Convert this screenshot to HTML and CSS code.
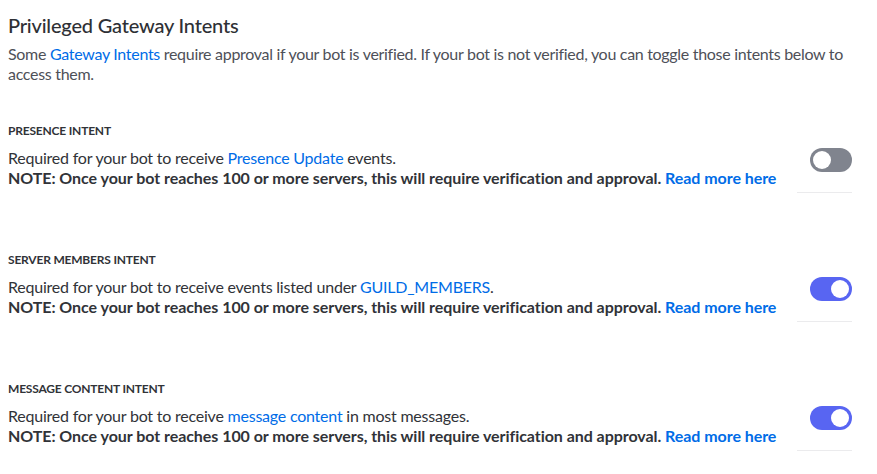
FILE: index.html
```html
<!DOCTYPE html>
<html>
<head>
<meta charset="utf-8">
<link rel="stylesheet" href="styles.css">
</head>
<body>
<div class="page">
  <h2 class="title">Privileged Gateway Intents</h2>
  <p class="intro">Some <a class="link">Gateway Intents</a> require approval if your bot is verified. If your bot is not verified, you can toggle those intents below to access them.</p>

  <section class="intent">
    <h3 class="label">PRESENCE INTENT</h3>
    <div class="row">
      <div class="text">
        <div class="desc">Required for your bot to receive <a class="link">Presence Update</a> events.</div>
        <div class="note">NOTE: Once your bot reaches 100 or more servers, this will require verification and approval. <a class="link">Read more here</a></div>
      </div>
      <div class="control">
        <div class="toggle off"><span class="knob"></span></div>
        <div class="divider"></div>
      </div>
    </div>
  </section>

  <section class="intent">
    <h3 class="label">SERVER MEMBERS INTENT</h3>
    <div class="row">
      <div class="text">
        <div class="desc">Required for your bot to receive events listed under <a class="link">GUILD_MEMBERS</a>.</div>
        <div class="note">NOTE: Once your bot reaches 100 or more servers, this will require verification and approval. <a class="link">Read more here</a></div>
      </div>
      <div class="control">
        <div class="toggle on"><span class="knob"></span></div>
        <div class="divider"></div>
      </div>
    </div>
  </section>

  <section class="intent">
    <h3 class="label">MESSAGE CONTENT INTENT</h3>
    <div class="row">
      <div class="text">
        <div class="desc">Required for your bot to receive <a class="link">message content</a> in most messages.</div>
        <div class="note">NOTE: Once your bot reaches 100 or more servers, this will require verification and approval. <a class="link">Read more here</a></div>
      </div>
      <div class="control">
        <div class="toggle on"><span class="knob"></span></div>
        <div class="divider"></div>
      </div>
    </div>
  </section>
</div>
</body>
</html>
```

FILE: styles.css
```css
html, body {
  margin: 0;
  padding: 0;
  background: #ffffff;
}
body {
  font-family: Lato, "Liberation Sans", sans-serif;
  color: #313338;
}
.page {
  padding: 11px 25px 0 8px;
}
.title {
  margin: 0;
  font-size: 20px;
  font-weight: 500;
  line-height: 28px;
  letter-spacing: -0.2px;
  color: #2e3035;
}
.intro {
  margin: 5px 0 0 0;
  font-size: 16px;
  line-height: 20px;
  letter-spacing: -0.3px;
  color: #4e5058;
}
.link {
  color: #006ce7;
  text-decoration: none;
}
.intent {
  margin-top: 39px;
}
.intent + .intent {
  margin-top: 59px;
}
.label {
  margin: 0;
  font-size: 12px;
  line-height: 16px;
  font-weight: 700;
  letter-spacing: -0.2px;
  color: #313338;
}
.row {
  display: flex;
  align-items: flex-start;
  margin-top: 9px;
}
.text {
  flex: 1;
}
.desc {
  font-size: 16px;
  line-height: 20px;
  letter-spacing: -0.22px;
  color: #313338;
}
.note {
  font-size: 16px;
  line-height: 20px;
  font-weight: 700;
  letter-spacing: -0.05px;
  color: #313338;
}
.control {
  width: 55px;
  display: flex;
  flex-direction: column;
  align-items: flex-end;
}
.toggle {
  width: 42px;
  height: 24px;
  border-radius: 12px;
  position: relative;
}
.toggle.off { background: #80848e; }
.toggle.on { background: #5865f2; }
.knob {
  position: absolute;
  top: 3px;
  width: 18px;
  height: 18px;
  border-radius: 50%;
  background: #ffffff;
}
.toggle.off .knob { left: 3px; }
.toggle.on .knob { right: 3px; }
.divider {
  width: 55px;
  height: 1px;
  background: #ebebed;
  margin-top: 20px;
}
```
